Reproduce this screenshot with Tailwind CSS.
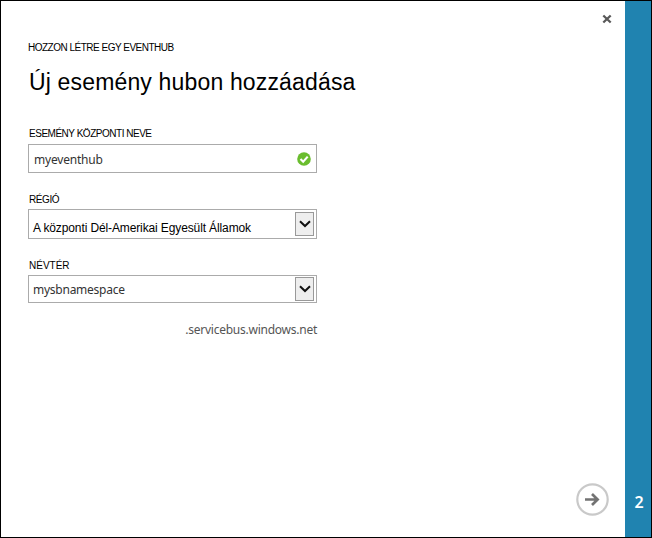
<!DOCTYPE html>
<html lang="hu">
<head>
<meta charset="utf-8">
<title>Új esemény hubon hozzáadása</title>
<script src="https://cdn.jsdelivr.net/npm/@tailwindcss/browser@4"></script>
</head>
<body class="h-[538px] w-[652px] overflow-hidden bg-white">
<div class="flex h-full w-full border border-black font-['Liberation_Sans',Arial,sans-serif] text-black">
  <main class="flex flex-1 flex-col pl-[27px] whitespace-nowrap">
    <header class="flex h-[109px] justify-between">
      <div class="pt-[40px]">
        <p class="h-[14px] text-[10px] leading-[14px] tracking-[-0.5px]">HOZZON LÉTRE EGY EVENTHUB</p>
        <h1 class="mt-[12px] pl-px text-[23px] leading-[30px] tracking-[0.16px]">Új esemény hubon hozzáadása</h1>
      </div>
      <button class="mt-[13px] mr-[13px] size-[10px]" aria-label="Bezárás">
        <svg viewBox="0 0 10 10" class="size-[10px]" fill="none" stroke="#595959" stroke-width="2.3"><path d="M1.3 1.5 8.7 8.5M8.7 1.5 1.3 8.5"/></svg>
      </button>
    </header>
    <form class="flex w-[289px] flex-col">
      <label class="mt-[17px] h-[14px] pl-px text-[10px] leading-[14px] tracking-[-0.48px]">ESEMÉNY KÖZPONTI NEVE</label>
      <div class="mt-[3px] flex h-[29px] items-center justify-between border border-[#ababab] pr-[5px] pl-[5px] font-['Noto_Sans',sans-serif] text-[12px] tracking-[-0.2px] text-[#333]">
        <span class="pt-[2px]">myeventhub</span>
        <svg viewBox="0 0 14 14" class="size-[14px]"><circle cx="7" cy="7" r="6.8" fill="#6abd2e"/><path d="m3.5 7 2.7 2.8 4.5-5.2" fill="none" stroke="#fff" stroke-width="2.1"/></svg>
      </div>
      <label class="mt-[20px] h-[14px] pl-px text-[10px] leading-[14px] tracking-[-0.4px]">RÉGIÓ</label>
      <div class="mt-[2px] flex h-[30px] items-center justify-between border border-[#ababab] pr-[2px] pl-[4px] text-[12px] tracking-[-0.12px]">
        <span class="pt-[7px]">A központi Dél-Amerikai Egyesült Államok</span>
        <span class="flex h-[24px] w-[19px] items-center justify-center border border-[#999] bg-[#eee]"><svg viewBox="0 0 12 8" class="h-[8px] w-[12px]" fill="none" stroke="#111" stroke-width="2"><path d="m1 1.2 5 4.8 5-4.8"/></svg></span>
      </div>
      <label class="mt-[20px] h-[14px] pl-px text-[10px] leading-[14px]">NÉVTÉR</label>
      <div class="mt-[2px] flex h-[28px] items-center justify-between border border-[#ababab] pr-[2px] pl-[4px] font-['Noto_Sans',sans-serif] text-[12px] tracking-[-0.25px] text-[#333]">
        <span class="pt-[2px]">mysbnamespace</span>
        <span class="flex h-[24px] w-[19px] items-center justify-center border border-[#999] bg-[#eee]"><svg viewBox="0 0 12 8" class="h-[8px] w-[12px]" fill="none" stroke="#111" stroke-width="2"><path d="m1 1.2 5 4.8 5-4.8"/></svg></span>
      </div>
      <p class="mt-[18px] text-right font-['Noto_Sans',sans-serif] text-[12px] leading-[18px] tracking-[-0.25px] text-[#555]">.servicebus.windows.net</p>
    </form>
    <button class="mt-auto mr-[15px] mb-[20px] size-[34px] self-end" aria-label="Tovább">
      <svg viewBox="0 0 34 34" class="size-[34px]" fill="none"><circle cx="16.5" cy="16.5" r="15.2" stroke="#c9c9c9" stroke-width="2.2"/><path d="M9 16.5h12.5M16 11l5.6 5.5L16 22" stroke="#737373" stroke-width="2.7"/></svg>
    </button>
  </main>
  <aside class="flex w-[26px] flex-col justify-end bg-[#2083b0] pb-[23px] pl-[2px] text-center font-['Noto_Sans',sans-serif] text-[16px] leading-[24px] font-semibold text-white">2</aside>
</div>
</body>
</html>
